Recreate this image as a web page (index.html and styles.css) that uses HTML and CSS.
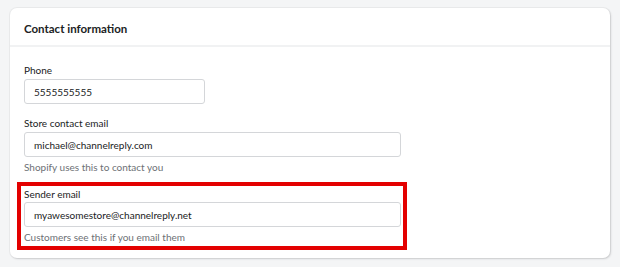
FILE: index.html
```html
<!DOCTYPE html>
<html>
<head>
<meta charset="utf-8">
<link rel="stylesheet" href="styles.css">
</head>
<body>
<div class="card">
  <div class="card-header">Contact information</div>
  <div class="card-body">
    <div class="field">
      <div class="label">Phone</div>
      <input class="input input-short" type="text" value="5555555555">
    </div>
    <div class="field field-gap">
      <div class="label">Store contact email</div>
      <input class="input" type="text" value="michael@channelreply.com">
      <div class="help">Shopify uses this to contact you</div>
    </div>
    <div class="highlight">
      <div class="label label-tight">Sender email</div>
      <input class="input" type="text" value="myawesomestore@channelreply.net">
      <div class="help">Customers see this if you email them</div>
    </div>
  </div>
</div>
</body>
</html>
```
FILE: styles.css
```css
html, body {
  margin: 0;
  background: #f4f5f6;
}
body {
  padding: 8px 10px;
  font-family: "Lato", "Liberation Sans", sans-serif;
  font-size: 10px;
  color: #202223;
}
.card {
  width: 600px;
  background: #fff;
  border-radius: 7px;
  box-shadow: 0 0 0 1px rgba(63, 63, 68, 0.05), 1px 1px 2px rgba(63, 63, 68, 0.18);
}
.card-header {
  height: 39px;
  box-sizing: border-box;
  padding: 13px 14px 0;
  font-size: 11.5px;
  font-weight: 700;
  line-height: 16px;
  border-bottom: 2px solid #f1f2f3;
}
.card-body {
  padding: 15px 14px 8px;
}
.label {
  line-height: 16px;
  margin-bottom: 1px;
}
.label-tight {
  margin-bottom: 0;
}
.input {
  display: block;
  box-sizing: border-box;
  width: 377px;
  height: 25px;
  margin: 0;
  padding: 0 9px;
  border: 1px solid #d4d6d9;
  border-radius: 3px;
  font-family: inherit;
  font-size: 10px;
  color: #202223;
  background: #fff;
  outline: none;
}
.input-short {
  width: 181px;
}
.field-gap {
  margin-top: 11px;
}
.help {
  margin-top: 2px;
  line-height: 16px;
  color: #6d7175;
}
.highlight {
  width: 390px;
  box-sizing: border-box;
  margin: 7px 0 0 -7px;
  padding: 0 2px 1px 3px;
  border: 4px solid #e30000;
}
```
